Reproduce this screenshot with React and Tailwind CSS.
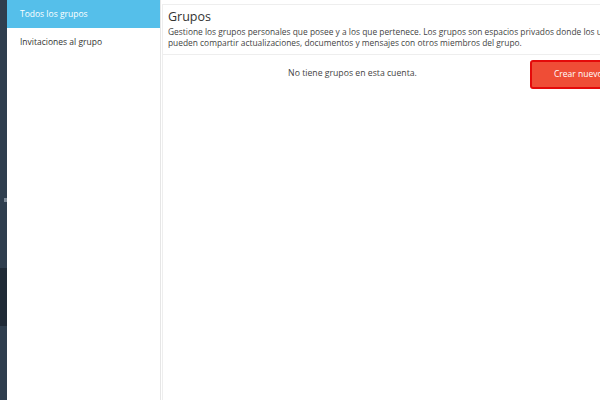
import React from 'react';

// Sidebar tabs for the groups page
const TABS = [
  { label: 'Todos los grupos', active: true },
  { label: 'Invitaciones al grupo', active: false },
];

export default function App() {
  return (
    <div className="w-[600px] h-[400px] overflow-hidden flex bg-white text-[#333] font-['Open_Sans',sans-serif]">
      {/* edge of the dark app rail */}
      <div className="w-[7px] shrink-0 h-full bg-[#2f3e4e] flex flex-col">
        <div className="h-[196px]" />
        <div className="h-[8px] flex items-center justify-end">
          <div className="w-[3px] h-[4px] bg-[#7d8996]" />
        </div>
        <div className="h-[64px]" />
        <div className="h-[58px] bg-[#1f2a36]" />
      </div>

      <aside className="w-[154px] shrink-0 h-full border-r border-[#e6e6e6] flex flex-col">
        {TABS.map((tab) => (
          <div
            key={tab.label}
            className={
              tab.active
                ? 'h-[28px] flex items-center pl-[13px] bg-[#55bfea] text-white text-[8.5px] whitespace-nowrap'
                : 'h-[28px] flex items-center pl-[13px] text-[#333] text-[8.5px] whitespace-nowrap'
            }
          >
            {tab.label}
          </div>
        ))}
      </aside>

      <main className="flex-1 min-w-0 h-full pl-[1px] pt-[4px]">
        <div className="border-l border-[#eeeeee] h-full">
          <div className="border-t border-[#eeeeee] border-b pl-[5px] pt-[3px] pb-[6px] whitespace-nowrap overflow-hidden">
            <h1 className="text-[12.5px] leading-[18px] text-[#333]">Grupos</h1>
            <p className="text-[8.4px] leading-[11px] text-[#444]">
              Gestione los grupos personales que posee y a los que pertenece. Los grupos son espacios privados donde los usuarios
              <br />
              pueden compartir actualizaciones, documentos y mensajes con otros miembros del grupo.
            </p>
          </div>
          <div className="flex items-start pt-[5px]">
            <div className="flex-1 text-center text-[8.7px] text-[#444] pt-[7px] pl-[12px]">
              No tiene grupos en esta cuenta.
            </div>
            <button className="shrink-0 h-[29px] w-[90px] mr-[-20px] rounded-[3px] border-2 border-[#e40a0a] bg-[#ef4d36] text-white text-[8.5px] text-left pl-[22px] whitespace-nowrap">
              Crear nuevo
            </button>
          </div>
        </div>
      </main>
    </div>
  );
}
